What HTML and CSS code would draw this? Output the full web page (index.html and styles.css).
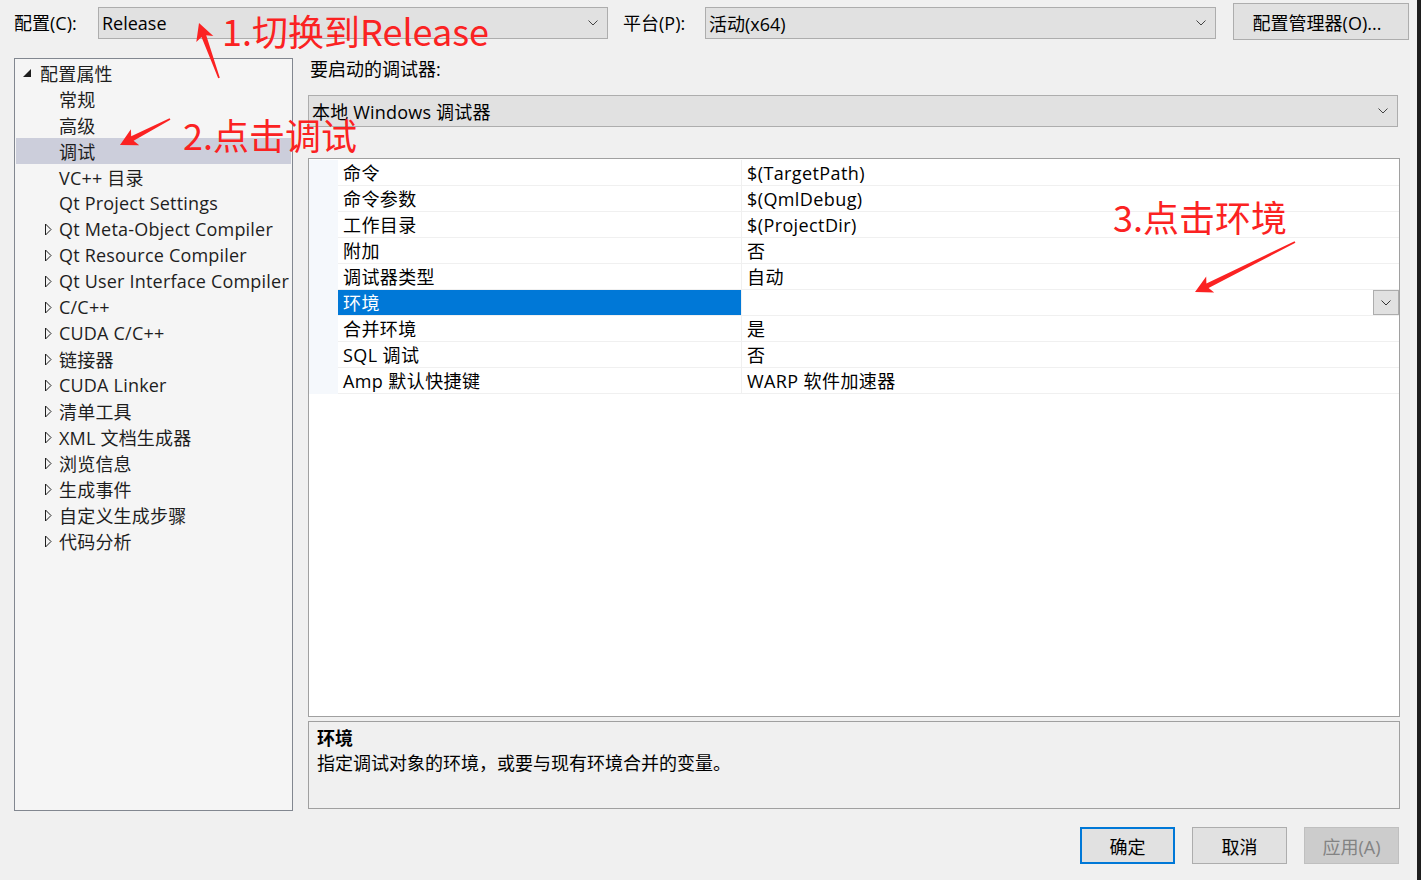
FILE: index.html
```html
<!DOCTYPE html>
<html lang="zh-CN">
<head>
<meta charset="UTF-8">
<title>调试属性页</title>
<link rel="stylesheet" href="styles.css">
</head>
<body>
	<div class="dialog">
		<div class="topbar">
			<span class="top-label">配置(C):</span>
			<div class="combo combo-config">
				<span>Release</span>
				<svg class="chevron" width="10" height="6" viewBox="0 0 10 6"><path d="M0.5 0.5 L5 5 L9.5 0.5" fill="none" stroke="#444" stroke-width="1"/></svg>
			</div>
			<span class="top-label platform-label">平台(P):</span>
			<div class="combo combo-platform">
				<span>活动(x64)</span>
				<svg class="chevron" width="10" height="6" viewBox="0 0 10 6"><path d="M0.5 0.5 L5 5 L9.5 0.5" fill="none" stroke="#444" stroke-width="1"/></svg>
			</div>
			<button class="btn btn-manager">配置管理器(O)...</button>
		</div>

		<div class="main">
			<div class="tree">
				<div class="tree-row root">
					<span class="twisty"><svg width="10" height="10" viewBox="0 0 10 10"><path d="M9 1 L9 9 L1 9 Z" fill="#1e1e1e"/></svg></span>配置属性
				</div>
				<div class="tree-row child"><span class="twisty"></span>常规</div>
				<div class="tree-row child"><span class="twisty"></span>高级</div>
				<div class="tree-row child selected"><span class="twisty"></span>调试</div>
				<div class="tree-row child"><span class="twisty"></span>VC++ 目录</div>
				<div class="tree-row child"><span class="twisty"></span>Qt Project Settings</div>
				<div class="tree-row child"><span class="twisty"><svg width="8" height="13" viewBox="0 0 8 13"><path d="M1.5 1 L7 6.5 L1.5 12 Z" fill="none" stroke="#1e1e1e" stroke-width="1"/></svg></span>Qt Meta-Object Compiler</div>
				<div class="tree-row child"><span class="twisty"><svg width="8" height="13" viewBox="0 0 8 13"><path d="M1.5 1 L7 6.5 L1.5 12 Z" fill="none" stroke="#1e1e1e" stroke-width="1"/></svg></span>Qt Resource Compiler</div>
				<div class="tree-row child"><span class="twisty"><svg width="8" height="13" viewBox="0 0 8 13"><path d="M1.5 1 L7 6.5 L1.5 12 Z" fill="none" stroke="#1e1e1e" stroke-width="1"/></svg></span>Qt User Interface Compiler</div>
				<div class="tree-row child"><span class="twisty"><svg width="8" height="13" viewBox="0 0 8 13"><path d="M1.5 1 L7 6.5 L1.5 12 Z" fill="none" stroke="#1e1e1e" stroke-width="1"/></svg></span>C/C++</div>
				<div class="tree-row child"><span class="twisty"><svg width="8" height="13" viewBox="0 0 8 13"><path d="M1.5 1 L7 6.5 L1.5 12 Z" fill="none" stroke="#1e1e1e" stroke-width="1"/></svg></span>CUDA C/C++</div>
				<div class="tree-row child"><span class="twisty"><svg width="8" height="13" viewBox="0 0 8 13"><path d="M1.5 1 L7 6.5 L1.5 12 Z" fill="none" stroke="#1e1e1e" stroke-width="1"/></svg></span>链接器</div>
				<div class="tree-row child"><span class="twisty"><svg width="8" height="13" viewBox="0 0 8 13"><path d="M1.5 1 L7 6.5 L1.5 12 Z" fill="none" stroke="#1e1e1e" stroke-width="1"/></svg></span>CUDA Linker</div>
				<div class="tree-row child"><span class="twisty"><svg width="8" height="13" viewBox="0 0 8 13"><path d="M1.5 1 L7 6.5 L1.5 12 Z" fill="none" stroke="#1e1e1e" stroke-width="1"/></svg></span>清单工具</div>
				<div class="tree-row child"><span class="twisty"><svg width="8" height="13" viewBox="0 0 8 13"><path d="M1.5 1 L7 6.5 L1.5 12 Z" fill="none" stroke="#1e1e1e" stroke-width="1"/></svg></span>XML 文档生成器</div>
				<div class="tree-row child"><span class="twisty"><svg width="8" height="13" viewBox="0 0 8 13"><path d="M1.5 1 L7 6.5 L1.5 12 Z" fill="none" stroke="#1e1e1e" stroke-width="1"/></svg></span>浏览信息</div>
				<div class="tree-row child"><span class="twisty"><svg width="8" height="13" viewBox="0 0 8 13"><path d="M1.5 1 L7 6.5 L1.5 12 Z" fill="none" stroke="#1e1e1e" stroke-width="1"/></svg></span>生成事件</div>
				<div class="tree-row child"><span class="twisty"><svg width="8" height="13" viewBox="0 0 8 13"><path d="M1.5 1 L7 6.5 L1.5 12 Z" fill="none" stroke="#1e1e1e" stroke-width="1"/></svg></span>自定义生成步骤</div>
				<div class="tree-row child"><span class="twisty"><svg width="8" height="13" viewBox="0 0 8 13"><path d="M1.5 1 L7 6.5 L1.5 12 Z" fill="none" stroke="#1e1e1e" stroke-width="1"/></svg></span>代码分析</div>
			</div>

			<div class="pane">
				<div class="pane-label">要启动的调试器:</div>
				<div class="combo combo-debugger">
					<span>本地 Windows 调试器</span>
					<svg class="chevron" width="10" height="6" viewBox="0 0 10 6"><path d="M0.5 0.5 L5 5 L9.5 0.5" fill="none" stroke="#444" stroke-width="1"/></svg>
				</div>

				<div class="grid">
					<div class="grid-row"><span class="gutter"></span><span class="cell name">命令</span><span class="cell value">$(TargetPath)</span></div>
					<div class="grid-row"><span class="gutter"></span><span class="cell name">命令参数</span><span class="cell value">$(QmlDebug)</span></div>
					<div class="grid-row"><span class="gutter"></span><span class="cell name">工作目录</span><span class="cell value">$(ProjectDir)</span></div>
					<div class="grid-row"><span class="gutter"></span><span class="cell name">附加</span><span class="cell value">否</span></div>
					<div class="grid-row"><span class="gutter"></span><span class="cell name">调试器类型</span><span class="cell value">自动</span></div>
					<div class="grid-row active">
						<span class="gutter"></span><span class="cell name">环境</span>
						<span class="cell value">
							<span class="drop-btn"><svg width="10" height="6" viewBox="0 0 10 6"><path d="M0.5 0.5 L5 5 L9.5 0.5" fill="none" stroke="#333" stroke-width="1"/></svg></span>
						</span>
					</div>
					<div class="grid-row"><span class="gutter"></span><span class="cell name">合并环境</span><span class="cell value">是</span></div>
					<div class="grid-row"><span class="gutter"></span><span class="cell name">SQL 调试</span><span class="cell value">否</span></div>
					<div class="grid-row"><span class="gutter"></span><span class="cell name">Amp 默认快捷键</span><span class="cell value">WARP 软件加速器</span></div>
				</div>

				<div class="desc">
					<div class="desc-title">环境</div>
					<div class="desc-text">指定调试对象的环境，或要与现有环境合并的变量。</div>
				</div>
			</div>
		</div>

		<div class="footer">
			<button class="btn btn-ok">确定</button>
			<button class="btn">取消</button>
			<button class="btn btn-disabled">应用(A)</button>
		</div>

		<!-- red screenshot annotations drawn over the dialog -->
		<svg class="marks" width="1417" height="880" viewBox="0 0 1417 880">
			<polygon points="219.8,77.7 206.2,35.3 213.3,35.9 199,23 196.3,42.1 201.5,37.0 218.2,78.3" fill="#fb2222"/>
			<polygon points="169.6,118.3 131.2,136.3 130.9,129.2 120,145 139.2,145.2 133.6,140.7 170.4,119.7" fill="#fb2222"/>
			<polygon points="1294.6,241.3 1206.4,283.5 1206.2,276.4 1195,292 1214.2,292.4 1208.6,287.9 1295.4,242.7" fill="#fb2222"/>
		</svg>
		<div class="note note-1">1.切换到Release</div>
		<div class="note note-2">2.点击调试</div>
		<div class="note note-3">3.点击环境</div>
	</div>
</body>
</html>
```

FILE: styles.css
```css
html {
	background-color: #1e1e1e;
}

body {
	margin: 0;
	padding: 0;
	font-family: 'Open Sans', 'Noto Sans CJK SC', sans-serif;
	font-size: 18px;
	color: #1e1e1e;
}

.dialog {
	position: relative;
	width: 1417px;
	height: 880px;
	background-color: #f0f0f0;
	display: flex;
	flex-direction: column;
	overflow: hidden;
}

/* top bar */
.topbar {
	display: flex;
	align-items: flex-start;
	height: 42px;
	padding: 3px 0 0 14px;
	box-sizing: border-box;
}

.top-label {
	width: 84px;
	line-height: 32px;
	margin-top: 4px;
	color: #000;
}

.platform-label {
	width: 82px;
	margin-left: 15px;
}

.combo {
	display: flex;
	align-items: center;
	justify-content: space-between;
	height: 32px;
	box-sizing: border-box;
	border: 1px solid #adadad;
	background-color: #e1e1e1;
	padding: 0 9px 0 3px;
	color: #000;
}

.combo-config {
	width: 510px;
	margin-top: 4px;
}

.combo-platform {
	width: 511px;
	margin-top: 4px;
}

.btn {
	font-family: inherit;
	font-size: 18px;
	height: 37px;
	width: 95px;
	box-sizing: border-box;
	background-color: #e1e1e1;
	border: 1px solid #adadad;
	color: #000;
	padding: 0;
}

.btn-manager {
	width: 176px;
	margin-left: 17px;
	padding-right: 8px;
}

/* main area */
.main {
	display: flex;
	margin-top: 16px;
	padding-left: 14px;
}

.tree {
	width: 279px;
	height: 753px;
	box-sizing: border-box;
	border: 1px solid #828790;
	background-color: #f5f5f5;
	padding-top: 1px;
	letter-spacing: 0.2px;
}

.tree-row {
	display: flex;
	align-items: center;
	height: 26px;
	margin: 0 1px;
	white-space: nowrap;
	overflow: hidden;
}

.tree-row.root {
	padding-left: 6px;
}

.tree-row.root .twisty {
	width: 18px;
}

.tree-row.child {
	padding-left: 28px;
}

.twisty {
	display: flex;
	align-items: center;
	flex-shrink: 0;
	width: 15px;
	height: 26px;
}

.tree-row.selected {
	background-color: #cccedb;
}

.pane {
	width: 1092px;
	margin-left: 15px;
}

.pane-label {
	line-height: 22px;
	padding-left: 2px;
	margin-bottom: 15px;
	color: #000;
}

.combo-debugger {
	width: 1090px;
	margin-bottom: 31px;
	letter-spacing: 0.2px;
}

/* property grid */
.grid {
	height: 559px;
	box-sizing: border-box;
	border: 1px solid #a0a0a0;
	background-color: #fff;
	padding-top: 1px;
	letter-spacing: 0.4px;
}

.grid-row {
	display: grid;
	grid-template-columns: 29px 404px 1fr;
	height: 26px;
}

.gutter {
	background-color: #f5f8fc;
}

.cell {
	line-height: 24px;
	padding-top: 1px;
	border-bottom: 1px solid #f0f0f0;
	padding-left: 5px;
	color: #000;
	white-space: nowrap;
}

.cell.name {
	border-right: 1px solid #f0f0f0;
}

.grid-row.active .name {
	background-color: #0078d7;
	color: #fff;
}

.grid-row.active .value {
	display: flex;
	justify-content: flex-end;
	align-items: flex-start;
	padding: 0;
	box-sizing: border-box;
}

.drop-btn {
	display: flex;
	align-items: center;
	justify-content: center;
	width: 26px;
	height: 25px;
	box-sizing: border-box;
	border: 1px solid #adadad;
	background-color: #e1e1e1;
}

/* description */
.desc {
	margin-top: 4px;
	height: 88px;
	box-sizing: border-box;
	border: 1px solid #a0a0a0;
	padding: 4px 8px;
	color: #000;
}

.desc-title {
	font-weight: bold;
	line-height: 25px;
}

.desc-text {
	line-height: 25px;
}

/* buttons */
.footer {
	display: flex;
	justify-content: flex-end;
	gap: 17px;
	margin-top: 16px;
	padding-right: 18px;
}

.btn-ok {
	border: 2px solid #0078d7;
}

.btn-disabled {
	background-color: #cccccc;
	border-color: #bfbfbf;
	color: #838383;
}

/* annotations */
.marks {
	position: absolute;
	left: 0;
	top: 0;
	pointer-events: none;
}

.note {
	position: absolute;
	font-family: 'Noto Sans CJK SC', sans-serif;
	font-size: 36px;
	line-height: 40px;
	color: #fb2222;
	white-space: nowrap;
}

.note-1 {
	left: 222px;
	top: 10px;
}

.note-2 {
	left: 183px;
	top: 114px;
}

.note-3 {
	left: 1113px;
	top: 196px;
}
```
